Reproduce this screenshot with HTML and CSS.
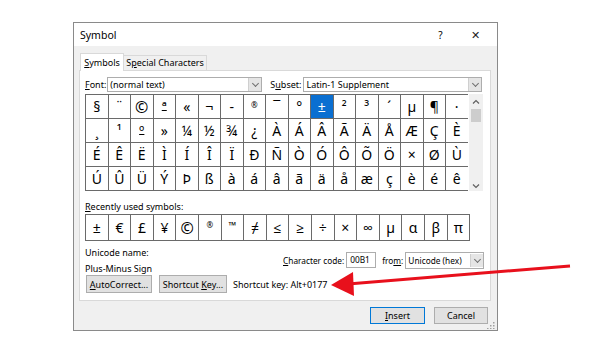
FILE: index.html
```html
<!DOCTYPE html>
<html lang="en">
<head>
    <meta charset="UTF-8">
    <title>Symbol</title>
    <link rel="stylesheet" href="styles.css">
</head>
<body>
<div class="stage">
    <div class="dialog">
        <div class="titlebar">
            <span class="title">Symbol</span>
            <span class="help">?</span>
            <span class="close">&#x2715;</span>
        </div>
        <div class="body">
            <div class="tabs">
                <div class="tab active"><u>S</u>ymbols</div>
                <div class="tab">S<u>p</u>ecial Characters</div>
            </div>
            <div class="panel">
                <div class="font-row">
                    <span class="lbl"><u>F</u>ont:</span>
                    <div class="combo font-combo"><span>(normal text)</span><i class="drop"></i></div>
                    <span class="lbl subset-lbl">S<u>u</u>bset:</span>
                    <div class="combo subset-combo"><span>Latin-1 Supplement</span><i class="drop"></i></div>
                </div>
                <div class="grid-wrap">
                    <div class="grid">
                        <div class="cell">§</div><div class="cell top">¨</div><div class="cell big">©</div><div class="cell ord">ª</div><div class="cell">«</div><div class="cell">¬</div><div class="cell">-</div><div class="cell sm">®</div><div class="cell">¯</div><div class="cell">°</div><div class="cell sel">±</div><div class="cell">²</div><div class="cell">³</div><div class="cell">´</div><div class="cell">µ</div><div class="cell">¶</div><div class="cell">·</div>
                        <div class="cell">¸</div><div class="cell">¹</div><div class="cell ord">º</div><div class="cell">»</div><div class="cell">¼</div><div class="cell">½</div><div class="cell">¾</div><div class="cell">¿</div><div class="cell">À</div><div class="cell">Á</div><div class="cell">Â</div><div class="cell">Ã</div><div class="cell">Ä</div><div class="cell">Å</div><div class="cell">Æ</div><div class="cell">Ç</div><div class="cell">È</div>
                        <div class="cell">É</div><div class="cell">Ê</div><div class="cell">Ë</div><div class="cell">Ì</div><div class="cell">Í</div><div class="cell">Î</div><div class="cell">Ï</div><div class="cell">Ð</div><div class="cell">Ñ</div><div class="cell">Ò</div><div class="cell">Ó</div><div class="cell">Ô</div><div class="cell">Õ</div><div class="cell">Ö</div><div class="cell">×</div><div class="cell">Ø</div><div class="cell">Ù</div>
                        <div class="cell">Ú</div><div class="cell">Û</div><div class="cell">Ü</div><div class="cell">Ý</div><div class="cell">Þ</div><div class="cell">ß</div><div class="cell">à</div><div class="cell">á</div><div class="cell">â</div><div class="cell">ã</div><div class="cell">ä</div><div class="cell">å</div><div class="cell">æ</div><div class="cell">ç</div><div class="cell">è</div><div class="cell">é</div><div class="cell">ê</div>
                    </div>
                    <div class="scrollbar">
                        <svg class="sb-arrow" width="14" height="10" viewBox="0 0 14 10"><path d="M4 6.5 L7 3.5 L10 6.5" fill="none" stroke="#606060" stroke-width="1.2"/></svg>
                        <div class="thumb"></div>
                        <div class="sb-space"></div>
                        <svg class="sb-arrow" width="14" height="10" viewBox="0 0 14 10"><path d="M4 3.5 L7 6.5 L10 3.5" fill="none" stroke="#606060" stroke-width="1.2"/></svg>
                    </div>
                </div>
                <div class="lbl recent-lbl"><u>R</u>ecently used symbols:</div>
                <div class="recent">
                    <div class="cell">±</div><div class="cell">€</div><div class="cell">£</div><div class="cell">¥</div><div class="cell big">©</div><div class="cell sm">®</div><div class="cell tm">™</div><div class="cell">≠</div><div class="cell">≤</div><div class="cell">≥</div><div class="cell">÷</div><div class="cell">×</div><div class="cell">∞</div><div class="cell">µ</div><div class="cell">α</div><div class="cell">β</div><div class="cell">π</div>
                </div>
                <div class="info">
                    <div class="info-left">
                        <div class="lbl">Unicode name:</div>
                        <div class="lbl">Plus-Minus Sign</div>
                    </div>
                    <div class="code-row">
                        <span class="lbl"><u>C</u>haracter code:</span>
                        <div class="code-box">00B1</div>
                        <span class="lbl from-lbl">fro<u>m</u>:</span>
                        <div class="combo from-combo"><span>Unicode (hex)</span><i class="drop"></i></div>
                    </div>
                </div>
                <div class="btn-row">
                    <div class="btn auto-btn"><span><u>A</u>utoCorrect...</span></div>
                    <div class="btn key-btn"><span>Shortcut <u>K</u>ey...</span></div>
                    <span class="lbl">Shortcut key: Alt+0177</span>
                </div>
            </div>
            <div class="footer">
                <div class="btn insert-btn"><span><u>I</u>nsert</span></div>
                <div class="btn cancel-btn"><span>Cancel</span></div>
            </div>
        </div>
        <svg class="grip" width="10" height="10" viewBox="0 0 10 10">
            <rect x="7" y="3" width="1.5" height="1.5" fill="#a0a0a0"/>
            <rect x="4" y="6" width="1.5" height="1.5" fill="#a0a0a0"/>
            <rect x="7" y="6" width="1.5" height="1.5" fill="#a0a0a0"/>
            <rect x="1" y="9" width="1.5" height="1" fill="#a0a0a0"/>
            <rect x="4" y="9" width="1.5" height="1" fill="#a0a0a0"/>
            <rect x="7" y="9" width="1.5" height="1" fill="#a0a0a0"/>
        </svg>
    </div>
    <!-- красная стрелка поверх диалога -->
    <svg class="arrow" width="596" height="359" viewBox="0 0 596 359">
        <line x1="570" y1="266" x2="348" y2="284" stroke="#e8101c" stroke-width="3"/>
        <polygon points="331,285 353,272 354,296" fill="#e8101c"/>
    </svg>
</div>
</body>
</html>
```

FILE: styles.css
```css
* {
    box-sizing: border-box;
}

body {
    margin: 0;
    background: #fff;
    font-family: "Noto Sans", "Open Sans", sans-serif;
    font-size: 9px;
    color: #000;
}

.stage {
    position: relative;
    width: 596px;
    height: 359px;
    overflow: hidden;
    padding: 22px 0 0 73px;
}

.dialog {
    position: relative;
    width: 425px;
    height: 309px;
    border: 1px solid #8a8a8a;
    background: #f0f0f0;
    display: flex;
    flex-direction: column;
}

.lbl {
    white-space: nowrap;
    flex-shrink: 0;
}

.titlebar {
    height: 23px;
    background: #fff;
    display: flex;
    align-items: center;
    padding: 0 4px 0 6px;
}

.titlebar .title {
    font-size: 10.5px;
    flex: 1;
}

.titlebar .help {
    font-size: 10px;
    width: 35px;
    text-align: center;
}

.titlebar .close {
    font-size: 11px;
    width: 35px;
    text-align: center;
    color: #222;
}

.body {
    flex: 1;
    padding: 7px 6px 0 5px;
    display: flex;
    flex-direction: column;
}

.tabs {
    display: flex;
    align-items: flex-end;
    height: 17px;
    padding-left: 1px;
}

.tab {
    height: 15px;
    line-height: 14px;
    border: 1px solid #d9d9d9;
    border-bottom: none;
    background: #f0f0f0;
    white-space: nowrap;
}

.tab.active {
    height: 18px;
    line-height: 17px;
    background: #fff;
    width: 44px;
    text-align: center;
    margin-bottom: -1px;
    position: relative;
    z-index: 1;
}

.tab + .tab {
    border-left: none;
    width: 83px;
    text-align: center;
}

.panel {
    height: 231px;
    background: #fff;
    border: 1px solid #d9d9d9;
    padding: 6px 0 0 5px;
}

.font-row {
    display: flex;
    align-items: center;
    height: 15px;
}

.combo {
    height: 15px;
    border: 1px solid #adadad;
    background: #fff;
    display: flex;
    align-items: center;
    padding-left: 2px;
    flex-shrink: 0;
    white-space: nowrap;
}

.combo span {
    flex: 1;
}

.combo .drop {
    width: 13px;
    height: 13px;
    background: #e5e5e5;
    border-left: 1px solid #cfcfcf;
    position: relative;
}

.combo .drop::after {
    content: "";
    position: absolute;
    left: 4px;
    top: 3px;
    width: 4px;
    height: 4px;
    border-right: 1px solid #707070;
    border-bottom: 1px solid #707070;
    transform: rotate(45deg);
}

.font-combo {
    width: 155px;
    margin-left: 1px;
}

.subset-lbl {
    margin-left: 8px;
}

.subset-combo {
    width: 179px;
    margin-left: 2px;
}

.grid-wrap {
    display: flex;
    margin-top: 2px;
    height: 97px;
}

.grid {
    display: grid;
    grid-template-columns: repeat(17, 21.5px);
    grid-template-rows: repeat(4, 23px);
    gap: 1px;
    border: 1px solid #6a6a6a;
    background: #6a6a6a;
    width: 383px;
}

.cell {
    background: #fff;
    display: flex;
    align-items: center;
    justify-content: center;
    font-size: 14px;
    line-height: 1;
}

.cell.sel {
    background: #0a6fd1;
    color: #fff;
}

.cell.sm {
    font-size: 8px;
    align-items: flex-start;
    padding-top: 6px;
}

.cell.tm {
    font-size: 10px;
    align-items: flex-start;
    padding-top: 5px;
}

.cell.big {
    font-size: 16px;
}

.cell.ord {
    text-decoration: underline;
    text-decoration-thickness: 1px;
    text-underline-offset: -2px;
}

.scrollbar {
    width: 14px;
    margin-left: 1px;
    background: #f0f0f0;
    display: flex;
    flex-direction: column;
    align-items: center;
}

.sb-arrow {
    display: block;
    margin-top: 3px;
}

.scrollbar .thumb {
    width: 10px;
    height: 13px;
    margin-top: 2px;
    background: #cdcdcd;
}

.sb-space {
    flex: 1;
}

.recent-lbl {
    margin-top: 9px;
    height: 12px;
}

.recent {
    margin-top: 2px;
    display: grid;
    grid-template-columns: repeat(17, 21.6px);
    grid-template-rows: 25px;
    gap: 1px;
    border: 1px solid #6a6a6a;
    background: #6a6a6a;
    width: 385px;
}

.info {
    display: flex;
    margin-top: 5px;
    height: 28px;
}

.info-left {
    width: 198px;
    flex-shrink: 0;
    display: flex;
    flex-direction: column;
    gap: 3px;
}

.code-row {
    display: flex;
    align-items: center;
    padding-top: 2px;
    height: 26px;
    font-size: 8.3px;
}

.code-box {
    width: 30px;
    height: 16px;
    border: 1px solid #adadad;
    background: #fff;
    margin-left: 2px;
    padding: 1px 0 0 3px;
    flex-shrink: 0;
}

.from-lbl {
    margin-left: 6px;
}

.from-combo {
    width: 79px;
    height: 17px;
    margin-left: 2px;
}

.btn-row {
    display: flex;
    align-items: center;
    margin-top: 1px;
    padding-left: 1px;
}

.btn {
    height: 18px;
    background: #e1e1e1;
    border: 1px solid #adadad;
    display: flex;
    align-items: center;
    justify-content: center;
    white-space: nowrap;
}

.auto-btn {
    width: 66px;
}

.key-btn {
    width: 68px;
    margin: 0 6px 0 7px;
}

.footer {
    display: flex;
    justify-content: flex-end;
    padding: 6px 3px 0 0;
    gap: 9px;
}

.insert-btn {
    width: 55px;
    height: 17px;
    border-color: #0078d7;
}

.cancel-btn {
    width: 54px;
    height: 17px;
}

.grip {
    position: absolute;
    right: 1px;
    bottom: 1px;
}

.arrow {
    position: absolute;
    left: 0;
    top: 0;
}
```
